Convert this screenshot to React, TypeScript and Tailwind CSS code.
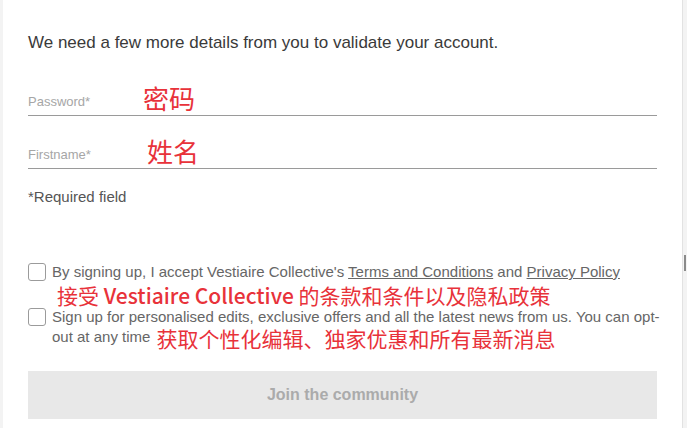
import React from 'react';

const sans = "font-['Liberation_Sans','Noto_Sans_CJK_SC',sans-serif]";
const cjk = "font-['Noto_Sans_CJK_SC','Liberation_Sans',sans-serif]";

function Field({ label, note, noteClass }: { label: string; note: string; noteClass: string }) {
  return (
    <div className="relative flex h-[53px] items-end border-b border-[#9a9a9a] pb-[7px]">
      <span className="text-[13px] leading-none text-[#a6a6a6]">{label}</span>
      <span className={`absolute bottom-[4px] text-[26px] leading-none text-[#e8323a] ${cjk} ${noteClass}`}>{note}</span>
    </div>
  );
}

function Checkbox() {
  return <span className="mt-[1px] block h-[18px] w-[18px] shrink-0 rounded-[3px] border border-[#9b9b9b] bg-white" />;
}

export default function App() {
  return (
    <div className={`flex h-[428px] w-[687px] bg-[#f3f3f3] ${sans}`}>
      <div className="ml-[3px] flex w-[680px] flex-col border-r border-[#e2e2e2] bg-white px-[25px]">
        <p className="mt-[33px] text-[17px] leading-[20px] text-[#3a3a3a]">
          We need a few more details from you to validate your account.
        </p>

        <div className="mt-[10px]">
          <Field label="Password*" note="密码" noteClass="left-[115px]" />
          <Field label="Firstname*" note="姓名" noteClass="left-[119px]" />
        </div>

        <p className="mt-[19px] text-[15px] leading-[18px] text-[#555]">*Required field</p>

        <div className="mt-[56px] flex gap-[6px]">
          <Checkbox />
          <div className="text-[15px] leading-[20px] text-[#666]">
            <p>
              By signing up, I accept Vestiaire Collective's{' '}
              <span className="underline">Terms and Conditions</span> and{' '}
              <span className="underline">Privacy Policy</span>
            </p>
            <p className={`ml-[5px] mt-[1px] text-[21px] leading-[24px] text-[#e8323a] ${cjk}`}>
              接受 <span className="font-medium">Vestiaire Collective</span> 的条款和条件以及隐私政策
            </p>
          </div>
        </div>

        <div className="flex gap-[6px]">
          <Checkbox />
          <p className="mr-[-4px] text-[15px] leading-[20px] text-[#666]">
            Sign up for personalised edits, exclusive offers and all the latest news from us. You can opt-
            <br />
            out at any time{' '}
            <span className={`ml-[2px] align-[-5px] text-[21px] leading-[20px] text-[#e8323a] ${cjk}`}>
              获取个性化编辑、独家优惠和所有最新消息
            </span>
          </p>
        </div>

        <button className="mt-[23px] h-[48px] w-full shrink-0 bg-[#e8e8e8] text-[16px] font-bold text-[#ababab]">
          Join the community
        </button>
      </div>
      <div className="relative flex-1">
        <span className="absolute left-[1px] top-[255px] h-[16px] w-[2px] bg-[#8a8a8a]" />
      </div>
    </div>
  );
}
